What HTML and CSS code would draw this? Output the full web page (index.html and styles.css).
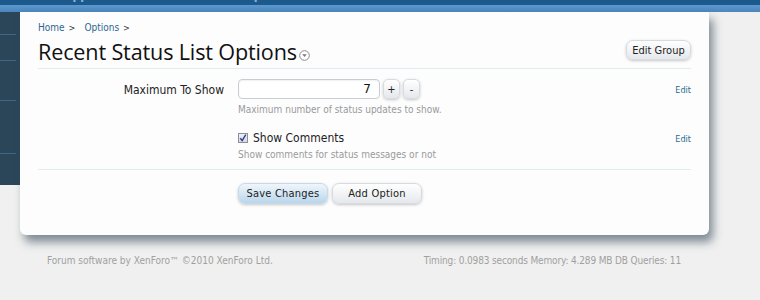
FILE: index.html
```html
<!DOCTYPE html>
<html>
<head>
<meta charset="utf-8">
<link rel="stylesheet" href="styles.css">
</head>
<body>
<header class="topbar">
  <nav class="tabs">
    <div class="tabs-left">
      <span class="tab t1">Users</span>
      <span class="tab t2">Appearance</span>
      <span class="tab t3">Tools</span>
      <span class="tab t4">Development</span>
    </div>
    <span class="tab tright">Unseen Resources Forums</span>
  </nav>
  <div class="substrip"></div>
</header>
<div class="body-row">
  <aside class="sidebar">
    <div class="side-item s1"></div>
    <div class="side-item s2"></div>
    <div class="side-item s3"></div>
    <div class="side-item s4"></div>
  </aside>
  <main class="panel">
    <div class="crumbs"><a class="crumb">Home</a><span class="arrow">&gt;</span><a class="crumb">Options</a><span class="arrow">&gt;</span></div>
    <div class="title-row">
      <h1 class="title">Recent Status List Options<span class="drop"><svg width="11" height="11" viewBox="0 0 11 11"><circle cx="5.5" cy="5.5" r="4.8" fill="#fff" stroke="#8a8a8a" stroke-width="1"/><path d="M3.2 4.3 L7.8 4.3 L5.5 7 Z" fill="#7a7a7a"/></svg></span></h1>
      <button class="btn btn-edit">Edit Group</button>
    </div>
    <div class="rule"></div>
    <div class="form-row">
      <div class="label">Maximum To Show</div>
      <div class="field">
        <div class="spin">
          <div class="input">7</div>
          <button class="btn spinbtn">+</button>
          <button class="btn spinbtn">-</button>
        </div>
        <div class="explain">Maximum number of status updates to show.</div>
      </div>
      <a class="edit">Edit</a>
    </div>
    <div class="form-row row2">
      <div class="label"></div>
      <div class="field">
        <label class="check"><span class="box"><svg width="10" height="10" viewBox="0 0 10 10"><path d="M2.3 5.2 L4.2 7.6 L7.8 1.6" fill="none" stroke="#2a3f8e" stroke-width="1.4"/></svg></span>Show Comments</label>
        <div class="explain">Show comments for status messages or not</div>
      </div>
      <a class="edit">Edit</a>
    </div>
    <div class="rule rule2"></div>
    <div class="actions">
      <button class="btn btn-primary">Save Changes</button>
      <button class="btn btn-sec">Add Option</button>
    </div>
  </main>
</div>
<footer class="footer">
  <span>Forum software by XenForo™ ©2010 XenForo Ltd.</span>
  <span class="timing">Timing: 0.0983 seconds Memory: 4.289 MB DB Queries: 11</span>
</footer>
</body>
</html>
```
FILE: styles.css
```css
html, body {
  margin: 0;
  padding: 0;
}
body {
  background: #f0f0f0;
  font-family: "DejaVu Sans", Tahoma, sans-serif;
  width: 760px;
  height: 300px;
  overflow: hidden;
}
.topbar {
  height: 12px;
  overflow: hidden;
}
.tabs {
  height: 5px;
  background: #1c5a8d;
  display: flex;
  justify-content: space-between;
  overflow: hidden;
  padding: 0 65px 0 8px;
}
.tabs-left {
  display: flex;
  gap: 21px;
}
.tab {
  font-size: 11px;
  line-height: 11px;
  margin-top: -9px;
  color: #8fb3d6;
  font-weight: bold;
}
.substrip {
  height: 7px;
  background: linear-gradient(#5e98cc, #4a86bd);
}
.body-row {
  display: flex;
  align-items: flex-start;
}
.sidebar {
  width: 20px;
  height: 173px;
  background: #2b4659;
  display: flex;
  flex-direction: column;
}
.side-item {
  border-bottom: 1px solid #3d6a86;
  margin-right: 4px;
}
.s1 { height: 22px; }
.s2 { height: 25px; }
.s3 { height: 39px; }
.s4 { height: 52px; }
.panel {
  width: 653px;
  height: 211px;
  padding: 10px 18px 2px 18px;
  background: #fdfdfe;
  border-radius: 0 0 6px 6px;
  box-shadow: 4px 7px 10px rgba(50, 70, 85, 0.6);
}
.crumbs {
  font-size: 10px;
  color: #176093;
  height: 12px;
  line-height: 12px;
  font-family: "DejaVu Sans Condensed", "DejaVu Sans", sans-serif;
}
.crumb { color: #2d6690; }
.arrow {
  color: #333;
  margin: 0 9px 0 4px;
  font-size: 9px;
}
.title-row {
  display: flex;
  justify-content: space-between;
  align-items: flex-start;
  margin-top: 5px;
  height: 29px;
}
.title {
  margin: 0;
  font-family: "Open Sans", sans-serif;
  font-weight: normal;
  font-size: 21.6px;
  line-height: 26px;
  color: #111;
  letter-spacing: -0.15px;
  display: flex;
  align-items: center;
}
.drop {
  display: inline-flex;
  margin: 7px 0 0 2px;
}
.btn {
  font-family: "DejaVu Sans Condensed", "DejaVu Sans", sans-serif;
  font-size: 11px;
  color: #222;
  border: 1px solid #d6dbe0;
  border-radius: 7px;
  background: linear-gradient(#ffffff, #e5e8ec);
  box-shadow: 0 1px 3px rgba(0, 0, 0, 0.22);
  padding: 0;
  cursor: pointer;
}
.btn-edit {
  width: 65px;
  height: 20px;
  margin-top: 1px;
}
.rule {
  height: 1px;
  background: #e1ecf0;
}
.form-row {
  display: flex;
  align-items: flex-start;
  margin-top: 10px;
}
.row2 { margin-top: 16px; }
.label {
  width: 186px;
  text-align: right;
  font-size: 12px;
  color: #222;
  padding-top: 4px;
  font-family: "DejaVu Sans Condensed", "DejaVu Sans", sans-serif;
}
.field {
  margin-left: 14px;
  flex: 1;
}
.spin {
  display: flex;
  gap: 3px;
  height: 20px;
}
.input {
  width: 132px;
  height: 18px;
  border: 1px solid #c9cdd2;
  border-radius: 4px;
  background: #fff;
  text-align: right;
  padding-right: 8px;
  font-size: 12px;
  line-height: 19px;
  color: #111;
  box-shadow: inset 0 1px 2px rgba(0, 0, 0, 0.06);
}
.spinbtn {
  width: 17px;
  height: 20px;
  border-radius: 5px;
  font-size: 11px;
}
.explain {
  font-size: 10px;
  color: #9a9a9a;
  margin-top: 5px;
  font-family: "DejaVu Sans Condensed", "DejaVu Sans", sans-serif;
}
.row2 .explain { margin-top: 4px; }
.edit {
  font-size: 9px;
  color: #2b6d8c;
  padding-top: 6px;
  font-family: "DejaVu Sans Condensed", "DejaVu Sans", sans-serif;
}
.row2 .edit { padding-top: 3px; }
.check {
  display: flex;
  align-items: center;
  font-size: 12px;
  color: #222;
  height: 14px;
  font-family: "DejaVu Sans Condensed", "DejaVu Sans", sans-serif;
}
.box {
  width: 10px;
  height: 10px;
  border: 1px solid #8f8f98;
  background: linear-gradient(#eef0f6, #d5d8e2);
  display: inline-flex;
  margin-right: 5px;
  box-sizing: border-box;
}
.box svg { margin: -1px; }
.rule2 { margin-top: 9px; }
.actions {
  display: flex;
  gap: 4px;
  margin-left: 200px;
  margin-top: 13px;
}
.btn-primary, .btn-sec {
  width: 90px;
  height: 21px;
  font-size: 11px;
  letter-spacing: 0.2px;
}
.btn-primary {
  background: linear-gradient(#f0f6fb, #b9d6ec);
  border-color: #c7d9e6;
}
.footer {
  display: flex;
  justify-content: space-between;
  padding: 20px 79px 0 47px;
  font-size: 10px;
  color: #a0a0a0;
  font-family: "DejaVu Sans Condensed", "DejaVu Sans", sans-serif;
}
.timing { letter-spacing: -0.15px; }
```
